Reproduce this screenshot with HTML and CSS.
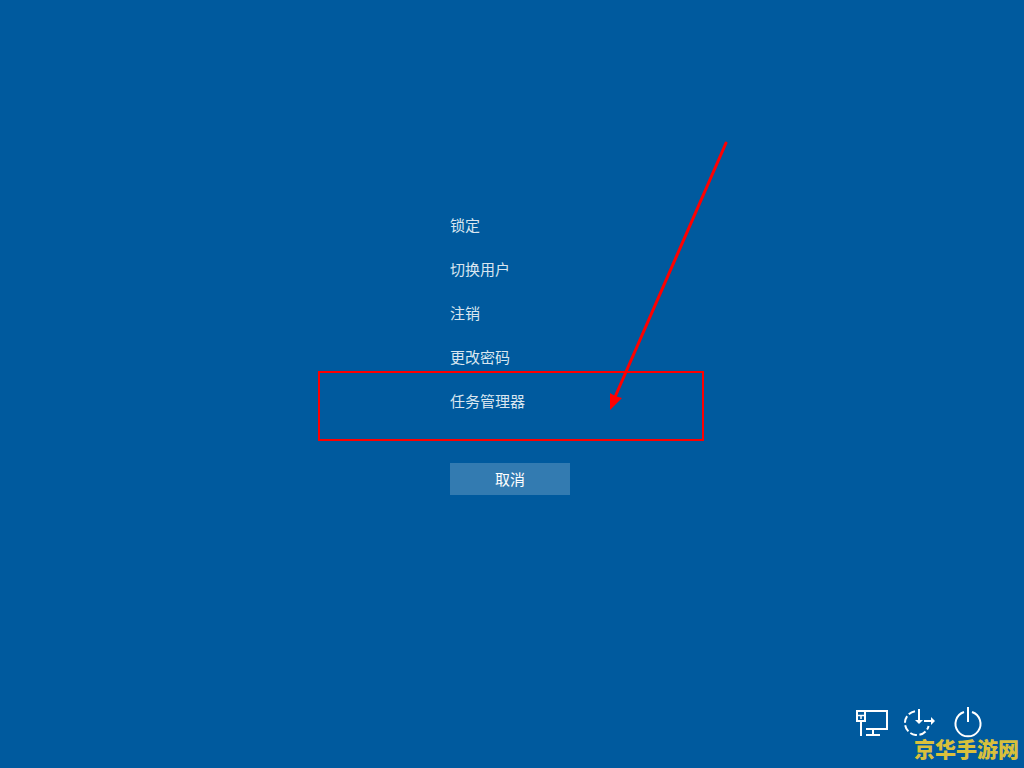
FILE: index.html
```html
<!DOCTYPE html>
<html lang="zh-CN">
<head>
    <meta charset="UTF-8">
    <meta name="viewport" content="width=device-width, initial-scale=1.0">
    <title>安全选项</title>
    <link rel="stylesheet" href="styles.css">
</head>
<body>
    <main>
        <div class="options">
            <ul>
                <li><button type="button">锁定</button></li>
                <li><button type="button">切换用户</button></li>
                <li><button type="button">注销</button></li>
                <li><button type="button">更改密码</button></li>
                <li class="marked"><button type="button">任务管理器</button></li>
            </ul>
            <button type="button" class="cancel">取消</button>
            <svg class="arrow" width="130" height="280" viewBox="0 0 130 280" aria-hidden="true">
                <path d="M121 8L10 262" stroke="#f00" stroke-width="3" stroke-linecap="round"/>
                <path d="M5 275L5 258L10 261L17 263Z" fill="#f00"/>
            </svg>
        </div>
    </main>

    <footer>
        <button type="button" aria-label="网络">
            <svg width="32" height="32" viewBox="0 0 32 32" fill="none" stroke="#fff" stroke-width="2">
                <path d="M10 5H31V23H10"/>
                <path d="M17 23V29M10 29H24"/>
                <path d="M1 5H9V15H1ZM5 15V30"/>
                <path d="M1 9.500H9M5 9V13" stroke-width="1.500"/>
            </svg>
        </button>
        <button type="button" aria-label="轻松使用">
            <svg width="32" height="32" viewBox="0 0 32 32" fill="none" stroke="#fff" stroke-width="2">
                <path d="M11 5.200A12 12 0 1 0 24.600 20" stroke-dasharray="7 2.500"/>
                <path d="M15 3V15M20 15H28"/>
                <path d="M11 14H19L15 18ZM27 11V19L31 15Z" fill="#fff" stroke="none"/>
            </svg>
        </button>
        <button type="button" aria-label="电源">
            <svg width="32" height="32" viewBox="0 0 32 32" fill="none" stroke="#fff" stroke-width="2">
                <path d="M12 6A12.500 12.500 0 1 0 20 6"/>
                <path d="M16 1V16"/>
            </svg>
        </button>
    </footer>
    <div class="watermark">京华手游网</div>
</body>
</html>
```
FILE: styles.css
```css
* {
    box-sizing: border-box;
}
body {
    margin: 0;
    min-height: 100vh;
    display: flex;
    flex-direction: column;
    position: relative;
    background-color: #005a9e;
    color: #fff;
    font-family: "Noto Sans CJK SC", sans-serif;
    font-size: 15px;
}
button {
    padding: 0;
    border: none;
    background: transparent;
    color: inherit;
    font: inherit;
}
main {
    flex: 1;
    display: flex;
    align-items: center;
    justify-content: center;
}
.options {
    position: relative;
    width: 124px;
}
ul {
    list-style: none;
    margin: 0 0 39px;
    padding: 0;
}
li button {
    display: block;
    width: 100%;
    height: 44px;
    padding-bottom: 4px;
    text-align: left;
    color: #d9e6f0;
}
.cancel {
    display: block;
    width: 120px;
    height: 32px;
    padding-bottom: 2px;
    background-color: #337bb1;
}
/* red frame and arrow around the task manager entry */
.marked {
    position: relative;
}
.marked::after {
    content: "";
    box-sizing: border-box;
    position: absolute;
    left: -132px;
    top: -9px;
    width: 386px;
    height: 70px;
    border: 2px solid #f00;
    pointer-events: none;
}
.arrow {
    position: absolute;
    left: 155px;
    top: -69px;
    pointer-events: none;
}
footer {
    display: flex;
    justify-content: flex-end;
    gap: 16px;
    padding: 7px 40px 30px;
}
footer button {
    width: 32px;
    height: 32px;
}
footer svg {
    display: block;
}
.watermark {
    position: absolute;
    right: 5px;
    bottom: 6px;
    color: #d9c03c;
    font-size: 21px;
    font-weight: 900;
    line-height: 28px;
}
```
